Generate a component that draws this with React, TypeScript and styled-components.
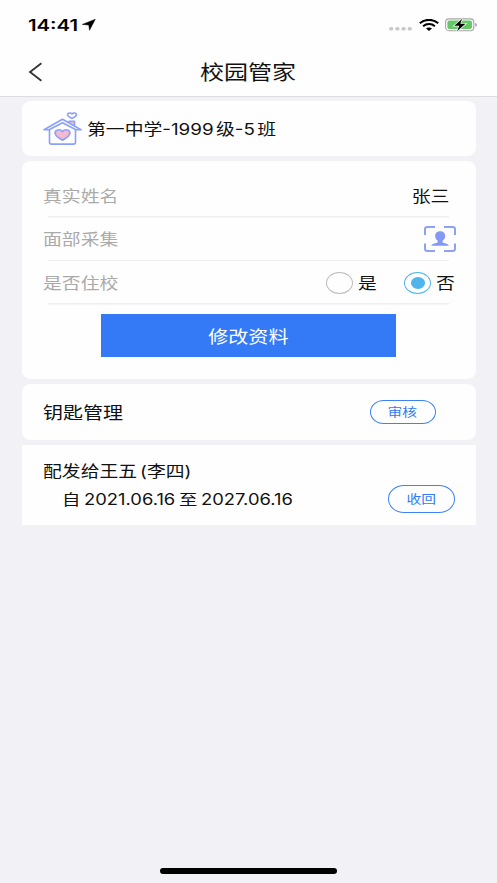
import React from "react";
import styled, { createGlobalStyle } from "styled-components";

const Global = createGlobalStyle`
  * { box-sizing: border-box; }
  body { margin: 0; background: #f1f1f6; }
`;

const Screen = styled.div`
  display: flex;
  flex-direction: column;
  width: 497px;
  height: 883px;
  overflow: hidden;
  background: #f1f1f6;
  color: #111;
  font-family: Inter, "Noto Sans CJK SC", sans-serif;
`;

const Header = styled.header`
  flex: none;
  height: 97px;
  background: #fefefe;
  border-bottom: 1px solid #dddde0;
`;

const StatusBar = styled.div`
  display: flex;
  align-items: center;
  height: 50px;
  padding: 0 20px 0 28px;
`;

const NavBar = styled.div`
  display: grid;
  grid-template-columns: 59px 1fr 61px;
  align-items: center;
  height: 44px;
  svg { margin-left: 28px; }
`;

/* Wide lettering: the glyphs are stretched along the reading direction. */
const Text = styled.span<{ $size: number; $color?: string; $weight?: number; $from?: string; $wide?: number; $space?: number }>`
  display: block;
  white-space: nowrap;
  line-height: 24px;
  font-size: ${(p) => p.$size}px;
  font-weight: ${(p) => p.$weight ?? 400};
  color: ${(p) => p.$color ?? "#111"};
  word-spacing: ${(p) => p.$space ?? 0}px;
  transform: translateY(1px) scaleX(${(p) => p.$wide ?? 1.2});
  transform-origin: ${(p) => p.$from ?? "left"} center;
`;

const Title = styled.h1`
  margin: 0;
  display: flex;
  justify-content: center;
`;

const StatusIcons = styled.div`
  display: flex;
  align-items: center;
  margin-left: auto;
`;

const Content = styled.main`
  display: flex;
  flex-direction: column;
  gap: 5px;
  padding: 4px 21.5px 0;
`;

const Card = styled.section<{ $height: number; $square?: boolean }>`
  height: ${(p) => p.$height}px;
  border-radius: ${(p) => (p.$square ? "0" : "9px / 8px")};
  background: #fefefe;
`;

const SchoolCard = styled(Card)`
  display: flex;
  align-items: center;
  padding-left: 21px;
  gap: 5.5px;
`;

const ProfileCard = styled(Card)`
  padding: 13px 0 0 21.5px;
`;

const Field = styled.div<{ $right: number }>`
  display: flex;
  align-items: center;
  justify-content: space-between;
  height: 43.5px;
  padding-right: ${(p) => p.$right}px;
  background: linear-gradient(#efeff2, #efeff2) 5px 100% / 401px 1.5px no-repeat;
`;

const Choices = styled.div`
  display: flex;
  align-items: center;
`;

const Choice = styled.label`
  display: flex;
  align-items: center;
  gap: 4.5px;
  width: 78px;
  &:last-child { width: 50px; }
`;

const Radio = styled.span<{ $on?: boolean }>`
  display: grid;
  place-items: center;
  flex: none;
  width: 27px;
  height: 22px;
  border: 1.4px solid ${(p) => (p.$on ? "#50b5ec" : "#bcbcbc")};
  border-radius: 50%;
  &::after {
    content: "";
    width: 14px;
    height: 11.5px;
    border-radius: 50%;
    background: ${(p) => (p.$on ? "#50b5ec" : "transparent")};
  }
`;

const PrimaryButton = styled.button`
  display: flex;
  align-items: center;
  justify-content: center;
  width: 295px;
  height: 43px;
  margin: 9.8px 0 0 58px;
  padding: 0;
  border: 0;
  background: #347af6;
  font-family: inherit;
`;

const KeyCard = styled(Card)`
  display: flex;
  align-items: center;
  justify-content: space-between;
  padding: 0 39.5px 0 21.5px;
`;

const GrantCard = styled(Card)`
  padding: 14px 21px 0 21.5px;
`;

const GrantPeriod = styled.div`
  display: flex;
  align-items: center;
  justify-content: space-between;
  height: 31px;
  padding-left: 18.5px;
`;

const PillButton = styled.button<{ $height: number }>`
  display: flex;
  align-items: center;
  justify-content: center;
  width: 66.5px;
  height: ${(p) => p.$height}px;
  padding: 0;
  border: 1.4px solid #3d82f6;
  border-radius: 16px / 14px;
  background: transparent;
  font-family: inherit;
`;

const HomeIndicator = styled.div`
  flex: none;
  width: 177px;
  height: 6px;
  margin: auto auto 9px 160px;
  border-radius: 3px;
  background: #000;
`;

const LocationIcon = styled.svg`margin-left: 16px;`;
const WifiIcon = styled.svg`margin: 0 6px 0 6px;`;

const House = () => (
  <svg width="39" height="34" viewBox="0 0 39 34" fill="none" stroke="#8aa0fb" strokeWidth="1.6" strokeLinejoin="round">
    <path d="M26 13V9.3h5.5V16" fill="#f5b9cf" />
    <path d="M1 17.8 19.5 7.3 38 17.8H33L19.5 10.8 6 17.8Z" fill="#fefefe" />
    <path d="M6.5 18v12.3q0 1.8 2 1.8h22q2 0 2-1.8V18" />
    <path d="M19.5 28.3C14.5 25.5 12 23.5 12 21.1c0-3.6 5.3-4.4 7.5-1.5 2.2-2.9 7.5-2.1 7.5 1.5 0 2.4-2.5 4.4-7.5 7.2Z" fill="#f5b9cf" />
    <path d="M29 6.4C25.8 4.8 24.5 3.8 24.5 2.7c0-2.1 3.2-2.2 4.5-.8 1.3-1.4 4.5-1.3 4.5.8 0 1.1-1.3 2.1-4.5 3.7Z" />
  </svg>
);

const FaceScan = () => (
  <svg width="32" height="26" viewBox="0 0 32 26">
    <path d="M1 9V3Q1 1 3.4 1H11M20 1h8.6q2.4 0 2.4 2v6M31 17.5V23q0 2-2.4 2H20M11 25H3.4Q1 25 1 23v-5.5" fill="none" stroke="#8ea0f8" strokeWidth="2" />
    <path d="M16.2 5.3c3 0 5 2.1 5 4.6 0 2.1-1 3.5-2.5 4.5-.5 1.5.1 2.3 1.5 2.7 2.6.7 4.1 1.2 4.7 2.7H7.3c.6-1.5 2.1-2 4.7-2.7 1.5-.4 2-1.2 1.6-2.7-1.5-1-2.4-2.4-2.4-4.5 0-2.5 2-4.6 5-4.6Z" fill="#8498f5" />
  </svg>
);

export default function App() {
  return (
    <Screen>
      <Global />
      <Header>
        <StatusBar>
          <Text $size={15.5} $weight={600} $color="#000" $wide={1.31}>14:41</Text>
          <LocationIcon width="14" height="12" viewBox="0 0 14 12">
            <path d="M13.3.3 7.5 11.3 6.8 6 .3 5.4Z" fill="#000" stroke="#000" strokeWidth=".5" strokeLinejoin="round" />
          </LocationIcon>
          <StatusIcons>
            <svg width="24" height="12" viewBox="0 0 24 12" fill="#c9c9c9">
              <rect x="0" y="8" width="4.3" height="3.6" rx="1.7" />
              <rect x="6.2" y="8" width="4.3" height="3.6" rx="1.7" />
              <rect x="12.4" y="8" width="4.3" height="3.6" rx="1.7" />
              <rect x="18.6" y="8" width="4.3" height="3.6" rx="1.7" />
            </svg>
            <WifiIcon width="20" height="12" viewBox="0 0 20 12" fill="none" stroke="#000">
              <path d="M.8 4.2C5.8-.2 14.2-.2 19.2 4.2" strokeWidth="2.1" />
              <path d="M4.1 7.2c3.3-2.8 8.5-2.8 11.8 0" strokeWidth="2" />
              <path d="M7 9.6c1.7-1.4 4.3-1.4 6 0l-3 2.3Z" fill="#000" stroke="none" />
            </WifiIcon>
            <svg width="32" height="14" viewBox="0 0 32 14">
              <rect x=".6" y=".9" width="28.2" height="11.8" rx="3.4" fill="none" stroke="#a5a5a5" strokeWidth="1.1" />
              <rect x="2.4" y="2.5" width="24.6" height="8.6" rx="2" fill="#65c866" />
              <path d="M30.3 4.7c2 .8 2 3.4 0 4.2Z" fill="#999" />
              <path d="M17.2.7 9.3 7.8h5L12 13.2l8.5-7.4h-5.2Z" fill="#000" stroke="#fefefe" strokeWidth="1.5" paintOrder="stroke" />
            </svg>
          </StatusIcons>
        </StatusBar>
        <NavBar>
          <svg width="15" height="20" viewBox="0 0 15 20">
            <path d="M13.4 1.2 2 10l11.4 8.8" fill="none" stroke="#333" strokeWidth="1.8" />
          </svg>
          <Title><Text $size={20} $from="center">校园管家</Text></Title>
        </NavBar>
      </Header>

      <Content>
        <SchoolCard $height={55}>
          <House />
          <Text $size={15.7} $space={-2.5}>第一中学-1999 级-5 班</Text>
        </SchoolCard>

        <ProfileCard $height={218}>
          <Field $right={26.5}>
            <Text $size={15.7} $color="#aaa">真实姓名</Text>
            <Text $size={15.7} $from="right">张三</Text>
          </Field>
          <Field $right={19.5}>
            <Text $size={15.7} $color="#aaa">面部采集</Text>
            <FaceScan />
          </Field>
          <Field $right={21.5}>
            <Text $size={15.7} $color="#aaa">是否住校</Text>
            <Choices>
              <Choice><Radio /><Text $size={15.7}>是</Text></Choice>
              <Choice><Radio $on /><Text $size={15.7}>否</Text></Choice>
            </Choices>
          </Field>
          <PrimaryButton>
            <Text $size={16.7} $color="#fff" $from="center">修改资料</Text>
          </PrimaryButton>
        </ProfileCard>

        <KeyCard $height={56}>
          <Text $size={16.7}>钥匙管理</Text>
          <PillButton $height={24}><Text $size={12.3} $color="#347af6" $from="center">审核</Text></PillButton>
        </KeyCard>

        <GrantCard $height={80} $square>
          <Text $size={15.7} $space={-2}>配发给王五 (李四)</Text>
          <GrantPeriod>
            <Text $size={15.3} $space={-1.2}>自 2021.06.16 至 2027.06.16</Text>
            <PillButton $height={28}><Text $size={12.3} $color="#347af6" $from="center">收回</Text></PillButton>
          </GrantPeriod>
        </GrantCard>
      </Content>
      <HomeIndicator />
    </Screen>
  );
}
